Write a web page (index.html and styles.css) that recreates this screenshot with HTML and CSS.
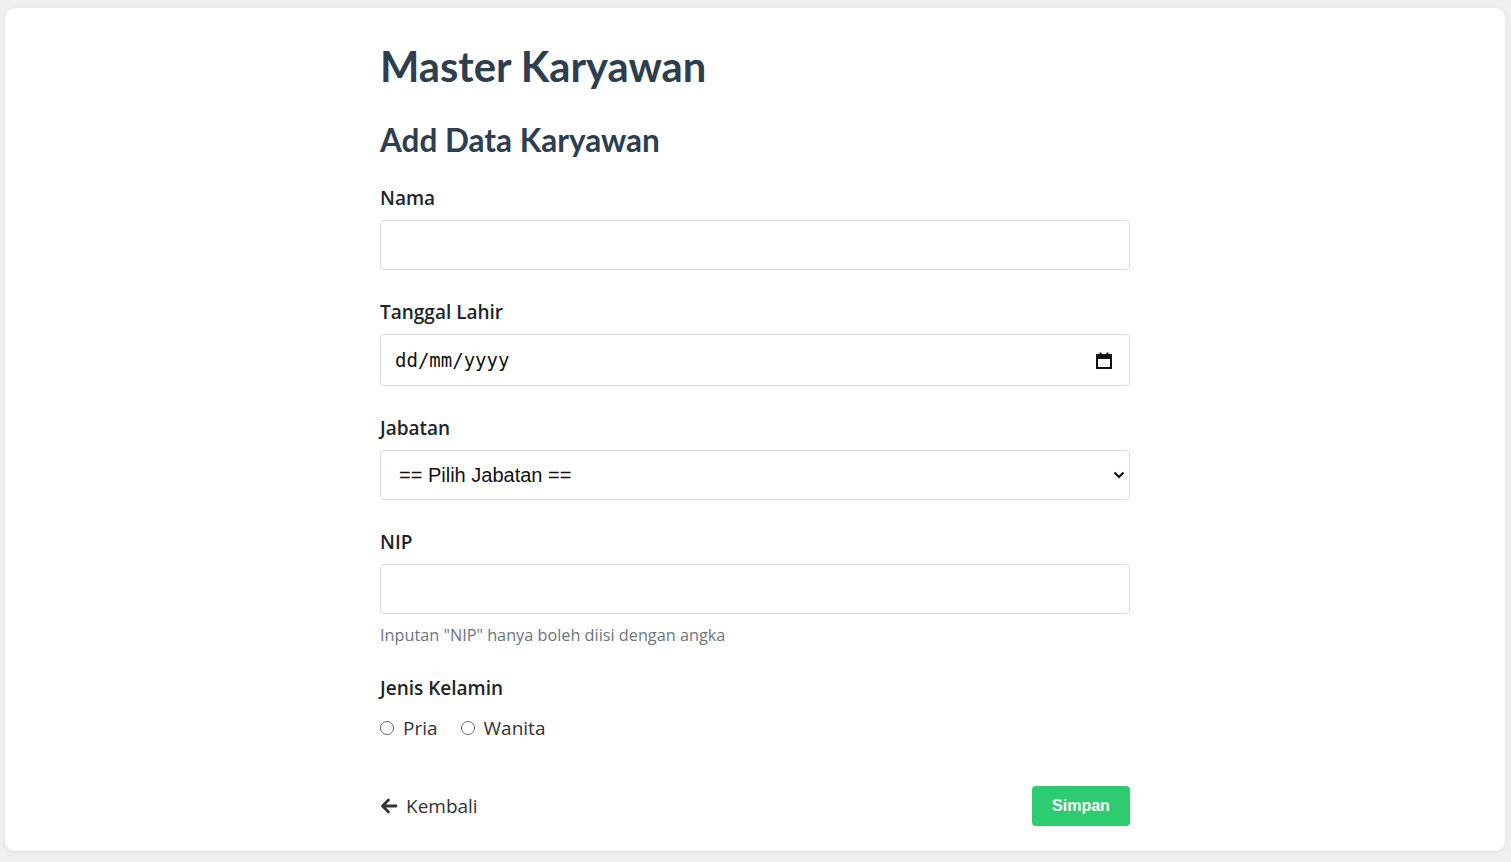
FILE: index.html
```html
<!DOCTYPE html>
<html lang="id">
<head>
<meta charset="utf-8">
<title>Master Karyawan</title>
<link rel="stylesheet" href="styles.css">
</head>
<body>
<div class="card">
  <div class="content">
    <h1 class="title">Master Karyawan</h1>
    <h2 class="subtitle">Add Data Karyawan</h2>
    <form class="form">
      <div class="field">
        <label class="label" for="nama">Nama</label>
        <input class="control" id="nama" type="text">
      </div>
      <div class="field">
        <label class="label" for="tgl">Tanggal Lahir</label>
        <div class="control date">
          <span class="date-text">dd/mm/yyyy</span>
          <svg class="cal" width="16" height="17" viewBox="0 0 16 17"><rect x="1" y="3" width="14" height="13" fill="none" stroke="#111" stroke-width="2"/><rect x="1" y="3" width="14" height="4" fill="#111"/><rect x="3.5" y="0.5" width="2" height="3" fill="#111"/><rect x="10.5" y="0.5" width="2" height="3" fill="#111"/></svg>
        </div>
      </div>
      <div class="field">
        <label class="label" for="jab">Jabatan</label>
        <div class="control select">
          <span class="select-text">== Pilih Jabatan ==</span>
          <svg class="chev" width="12" height="8" viewBox="0 0 12 8"><path d="M1.5 1.5 L6 6 L10.5 1.5" fill="none" stroke="#111" stroke-width="2.2"/></svg>
        </div>
      </div>
      <div class="field">
        <label class="label" for="nip">NIP</label>
        <input class="control" id="nip" type="text">
        <div class="help">Inputan "NIP" hanya boleh diisi dengan angka</div>
      </div>
      <div class="field">
        <div class="label">Jenis Kelamin</div>
        <div class="radios">
          <label class="radio"><span class="dot"></span>Pria</label>
          <label class="radio"><span class="dot"></span>Wanita</label>
        </div>
      </div>
      <div class="actions">
        <a class="back" href="#">
          <svg width="18" height="16" viewBox="0 0 18 16"><path d="M16 8 H3 M8.5 2 L2.5 8 L8.5 14" fill="none" stroke="#333" stroke-width="2.8" stroke-linecap="round" stroke-linejoin="round"/></svg>
          Kembali
        </a>
        <button class="btn" type="button">Simpan</button>
      </div>
    </form>
  </div>
</div>
</body>
</html>
```

FILE: styles.css
```css
html, body {
  margin: 0;
  padding: 0;
}
body {
  background: #f0f0f0;
  font-family: "Open Sans", "Noto Sans", sans-serif;
  color: #212529;
  padding: 8px 6px 11px 5px;
  box-sizing: border-box;
  height: 862px;
}
.card {
  background: #fff;
  border-radius: 10px;
  box-shadow: 0 1px 6px rgba(0,0,0,0.07);
  height: 843px;
  display: flex;
  justify-content: center;
}
.content {
  width: 750px;
  padding-top: 34px;
}
.title {
  margin: 0;
  font-family: "Lato", "Open Sans", sans-serif;
  font-size: 41.7px;
  line-height: 48px;
  font-weight: 700;
  color: #2c3e50;
}
.subtitle {
  margin: 32px 0 0;
  font-family: "Lato", "Open Sans", sans-serif;
  font-size: 31.5px;
  line-height: 36px;
  font-weight: 700;
  color: #2c3e50;
}
.form {
  margin-top: 28px;
}
.field {
  margin-bottom: 30px;
}
.label {
  display: block;
  font-size: 19px;
  font-weight: 600;
  line-height: 24px;
  margin-bottom: 10px;
  color: #212529;
}
.control {
  display: block;
  box-sizing: border-box;
  width: 100%;
  height: 50px;
  border: 1px solid #dcdcdc;
  border-radius: 4px;
  background: #fff;
  margin: 0;
}
.date {
  height: 52px;
  display: flex;
  align-items: center;
  justify-content: space-between;
  padding: 0 17px 0 14px;
}
.date-text {
  font-family: "DejaVu Sans Mono", monospace;
  font-size: 19px;
  color: #111;
}
.select {
  display: flex;
  align-items: center;
  justify-content: space-between;
  padding: 0 4px 0 18px;
}
.select-text {
  font-family: "Liberation Sans", Arial, sans-serif;
  font-size: 20px;
  color: #111;
}
.help {
  margin-top: 10px;
  font-size: 16.25px;
  line-height: 22px;
  color: #6c757d;
}
.radios {
  display: flex;
  gap: 23px;
  padding-top: 5px;
}
.radio {
  display: flex;
  align-items: center;
  gap: 9px;
  font-size: 19px;
  line-height: 26px;
  color: #333;
}
.dot {
  width: 14px;
  height: 14px;
  border: 1px solid #666;
  border-radius: 50%;
  box-sizing: border-box;
}
.actions {
  display: flex;
  justify-content: space-between;
  align-items: center;
  margin-top: 45px;
}
.back {
  display: flex;
  align-items: center;
  gap: 8px;
  font-size: 19px;
  line-height: 26px;
  color: #333;
  text-decoration: none;
}
.btn {
  width: 98px;
  height: 40px;
  border: none;
  border-radius: 4px;
  background: #2ecc71;
  color: #fff;
  font-family: "Liberation Sans", Arial, sans-serif;
  font-weight: 700;
  font-size: 16px;
}
```
